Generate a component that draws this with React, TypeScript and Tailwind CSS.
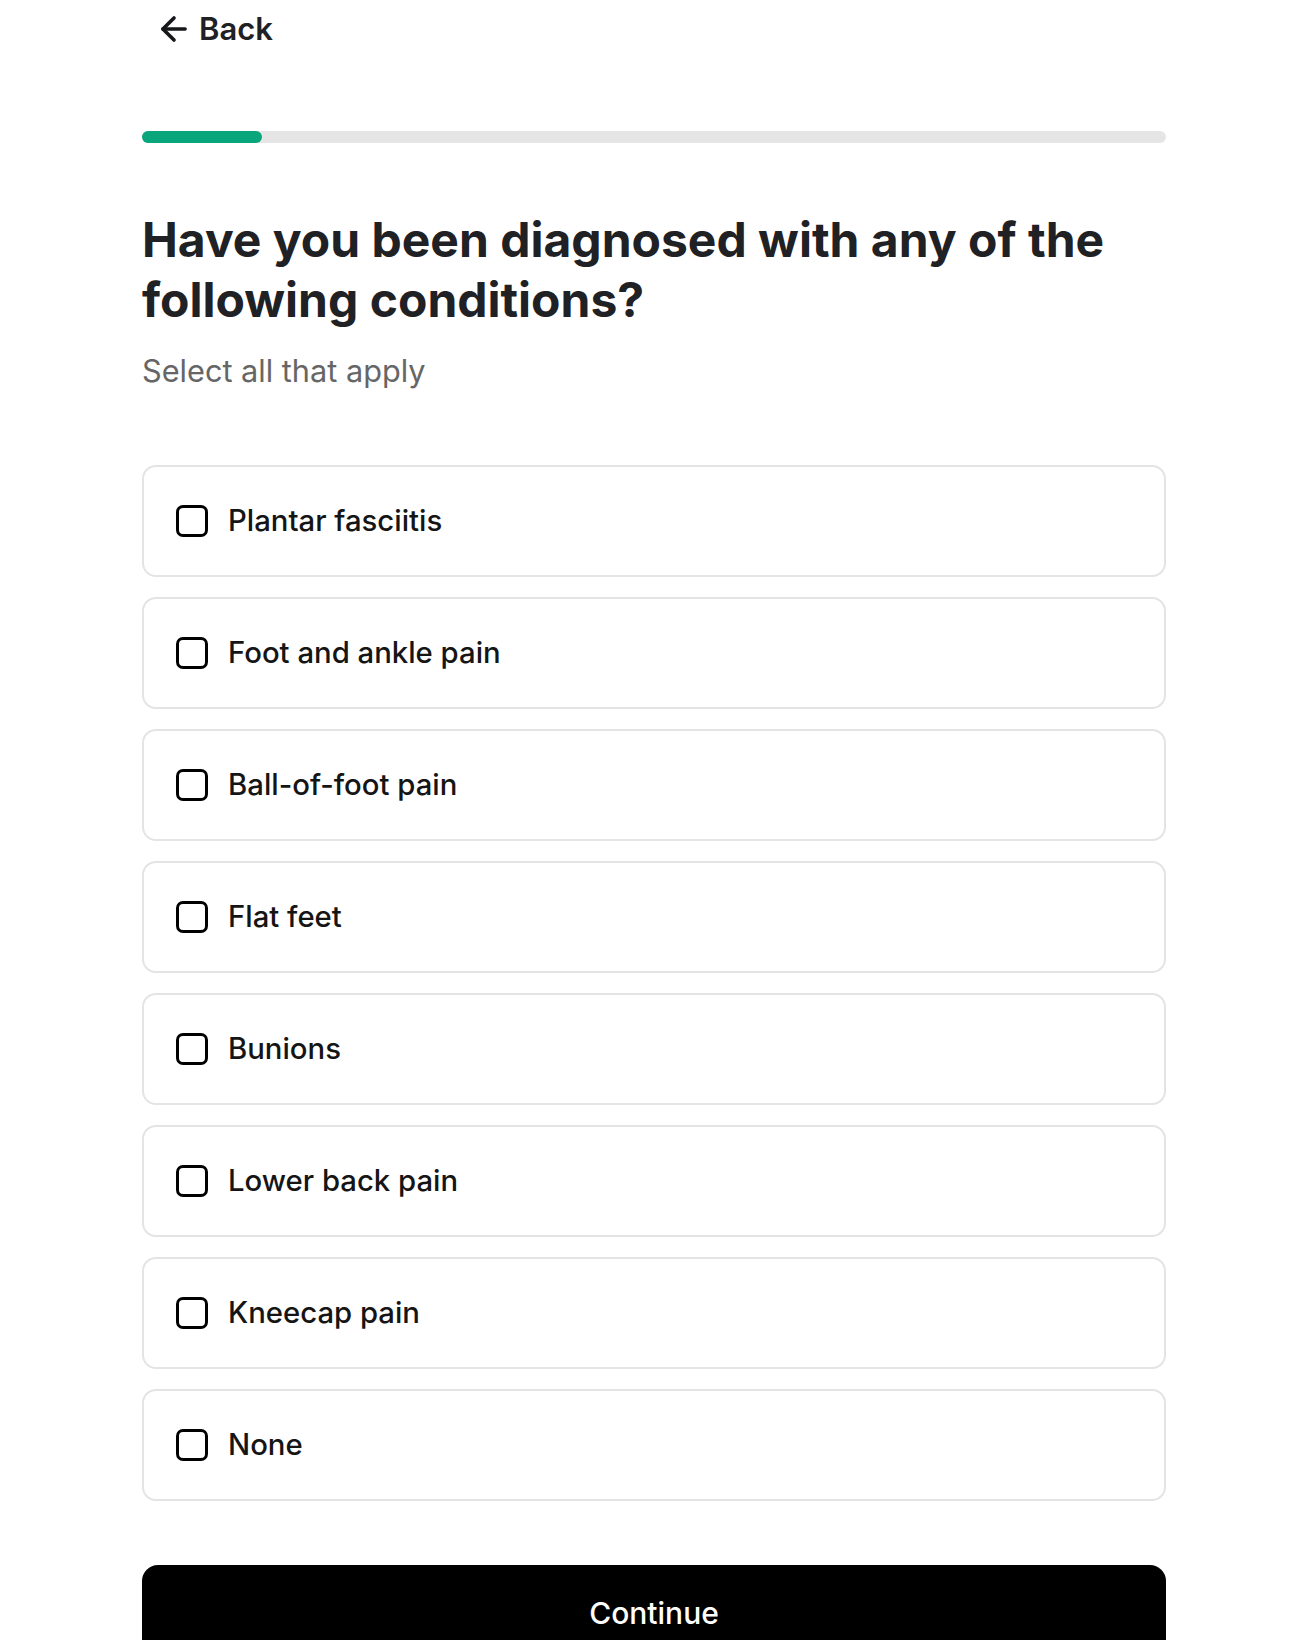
import React, { useState } from "react";
import { ArrowLeft } from "lucide-react";

const CONDITIONS = [
  "Plantar fasciitis",
  "Foot and ankle pain",
  "Ball-of-foot pain",
  "Flat feet",
  "Bunions",
  "Lower back pain",
  "Kneecap pain",
  "None",
];

function Option({ label, checked, onToggle }: { label: string; checked: boolean; onToggle: () => void }) {
  return (
    <button
      type="button"
      onClick={onToggle}
      className="flex h-[112px] w-full items-center gap-[20px] rounded-[14px] border-2 border-[#e4e4e4] bg-white pl-[32px] text-left"
    >
      <span
        className={
          checked
            ? "flex h-[32px] w-[32px] shrink-0 items-center justify-center rounded-[7px] border-[3.5px] border-black bg-black"
            : "flex h-[32px] w-[32px] shrink-0 items-center justify-center rounded-[7px] border-[3.5px] border-black bg-white"
        }
      />
      <span className="text-[29.3px] font-medium leading-none text-[#151515]">{label}</span>
    </button>
  );
}

export default function App() {
  const [selected, setSelected] = useState<string[]>([]);

  const toggle = (label: string) => {
    setSelected((prev) => (prev.includes(label) ? prev.filter((x) => x !== label) : [...prev, label]));
  };

  return (
    <div className="min-h-screen bg-white font-['Inter','Liberation_Sans',sans-serif]">
      <div className="ml-[142px] w-[1024px]">
        {/* back link */}
        <div className="flex h-[57px] items-center">
          <button type="button" className="ml-[13px] flex items-center gap-[6px] text-[#1f2124]">
            <ArrowLeft size={38} strokeWidth={2.3} className="text-[#15171a]" />
            <span className="text-[31px] font-semibold leading-none">Back</span>
          </button>
        </div>

        {/* progress */}
        <div className="mt-[74px] h-[12px] w-full rounded-full bg-[#e5e5e5]">
          <div className="h-full w-[120px] rounded-full bg-[#0aa67b]" />
        </div>

        <h1 className="mt-[67px] text-[48px] font-bold leading-[60px] text-[#1f2124]">
          Have you been diagnosed with any of the following conditions?
        </h1>
        <p className="mt-[23px] text-[30.7px] leading-[36px] text-[#666666]">Select all that apply</p>

        <div className="mt-[76px] flex flex-col gap-[20px]">
          {CONDITIONS.map((c) => (
            <Option key={c} label={c} checked={selected.includes(c)} onToggle={() => toggle(c)} />
          ))}
        </div>

        <button
          type="button"
          className="mt-[64px] flex h-[96px] w-full items-center justify-center rounded-[16px] bg-black text-[30px] font-medium text-white"
        >
          Continue
        </button>
      </div>
    </div>
  );
}
